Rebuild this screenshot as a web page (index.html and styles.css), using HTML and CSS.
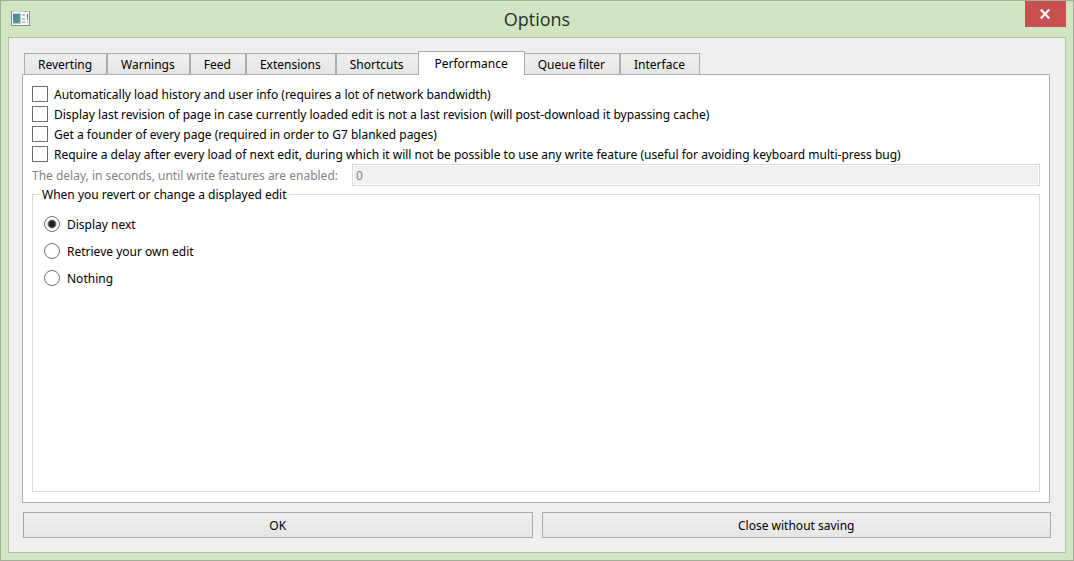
FILE: index.html
```html
<!DOCTYPE html>
<html lang="en">
<head>
<meta charset="utf-8">
<title>Options</title>
<link rel="stylesheet" href="styles.css">
</head>
<body>
<div class="window">
  <header class="titlebar">
    <svg class="app-icon" width="20" height="16" viewBox="0 0 20 16" aria-hidden="true">
      <defs>
        <linearGradient id="screen" x1="0" y1="0" x2="1" y2="1">
          <stop offset="0" stop-color="#4a7fa8"/>
          <stop offset="1" stop-color="#55a878"/>
        </linearGradient>
      </defs>
      <rect x="0" y="0" width="19" height="15" fill="#85898c"/>
      <rect x="1" y="1" width="17" height="13" fill="#fbfbfb"/>
      <rect x="1" y="0" width="17" height="1" fill="#c9ced3"/>
      <rect x="14" y="0" width="1" height="1" fill="#3c5a9a"/>
      <rect x="2" y="2" width="8" height="11" fill="#c3cbd6"/>
      <rect x="2" y="3" width="7" height="9" fill="url(#screen)"/>
      <path d="M11 3h3v2h-3zM11 7h3v2h-3zM11 10h3v2h-3zM16 10h1v2h-1z" fill="#c4c4c4"/>
      <rect x="16" y="3" width="1" height="3" fill="#3f62a0"/>
      <rect x="16" y="6" width="1" height="3" fill="#57a55c"/>
    </svg>
    <h1 class="title">Options</h1>
    <button class="close" type="button" aria-label="Close">
      <svg width="12" height="10" viewBox="0 0 12 10" aria-hidden="true">
        <path d="M1.8 .6L10.2 9.4M10.2 .6L1.8 9.4" fill="none" stroke="#fff" stroke-width="2.2"/>
      </svg>
    </button>
  </header>
  <form class="client">
    <div class="tabs" role="tablist">
      <button class="tab" type="button" role="tab">Reverting</button>
      <button class="tab" type="button" role="tab">Warnings</button>
      <button class="tab" type="button" role="tab">Feed</button>
      <button class="tab" type="button" role="tab">Extensions</button>
      <button class="tab" type="button" role="tab">Shortcuts</button>
      <button class="tab tab-active" type="button" role="tab" aria-selected="true">Performance</button>
      <button class="tab" type="button" role="tab">Queue filter</button>
      <button class="tab" type="button" role="tab">Interface</button>
    </div>
    <section class="pane" role="tabpanel">
      <label class="check"><input type="checkbox">Automatically load history and user info (requires a lot of network bandwidth)</label>
      <label class="check"><input type="checkbox">Display last revision of page in case currently loaded edit is not a last revision (will post-download it bypassing cache)</label>
      <label class="check"><input type="checkbox">Get a founder of every page (required in order to G7 blanked pages)</label>
      <label class="check"><input type="checkbox">Require a delay after every load of next edit, during which it will not be possible to use any write feature (useful for avoiding keyboard multi-press bug)</label>
      <div class="delay">
        <label for="delay">The delay, in seconds, until write features are enabled:</label>
        <input id="delay" class="delay-input" type="text" value="0" disabled>
      </div>
      <fieldset class="group">
        <legend>When you revert or change a displayed edit</legend>
        <label class="radio"><input type="radio" name="after" checked>Display next</label>
        <label class="radio"><input type="radio" name="after">Retrieve your own edit</label>
        <label class="radio"><input type="radio" name="after">Nothing</label>
      </fieldset>
    </section>
    <footer class="actions">
      <button class="button" type="button">OK</button>
      <button class="button" type="button">Close without saving</button>
    </footer>
  </form>
</div>
</body>
</html>
```
FILE: styles.css
```css
* { box-sizing: border-box; }

body {
  margin: 0;
  font: 12px/16px "Noto Sans", "Open Sans", sans-serif;
  color: #000;
}

button, input { font: inherit; color: inherit; }

.window {
  display: flex;
  flex-direction: column;
  min-height: 100vh;
  padding: 0 7px 7px;
  border: 1px solid #a2ae98;
  background: #d2e5c3;
}

.titlebar {
  display: grid;
  grid-template-columns: 1fr auto 1fr;
  height: 36px;
}

.app-icon { margin: 10px 3px; }

.title {
  margin: 0;
  font: 18px/36px "Open Sans", "Noto Sans", sans-serif;
  color: #2b2f28;
}

.close {
  justify-self: end;
  display: flex;
  align-items: center;
  justify-content: center;
  width: 41px;
  height: 26px;
  padding: 0 1px 1px 0;
  border: 0;
  background: #c75050;
}

.client {
  flex: 1;
  display: flex;
  flex-direction: column;
  padding: 13px 14px 14px 13px;
  border: 1px solid #b2c2a5;
  background: #efefef;
}

.tabs {
  display: flex;
  align-items: flex-end;
  padding-left: 2px;
}

.tab {
  height: 21px;
  padding: 1px 14px 0 13px;
  border: 1px solid #acacac;
  border-bottom: 0;
  background: linear-gradient(#f0f0f0, #e5e5e5);
}

.tab-active {
  height: 24px;
  margin: 0 -1px -1px;
  padding: 0 16px;
  background: #fff;
  z-index: 1;
}

.pane {
  flex: 1;
  display: flex;
  flex-direction: column;
  margin-right: 1px;
  padding: 9px 9px 10px;
  border: 1px solid #acacac;
  background: #fff;
}

.check, .radio {
  display: flex;
  align-items: flex-start;
  line-height: 18px;
}

.check {
  height: 20px;
  padding-top: 2px;
  gap: 6px;
}

.radio {
  height: 27px;
  padding-top: 5px;
  gap: 7px;
}

.check input, .radio input {
  appearance: none;
  flex: none;
  width: 16px;
  height: 16px;
  margin: 0;
  border: 1px solid #707070;
  background: #fff;
}

.radio input {
  border-radius: 50%;
}

.radio input:checked {
  background: radial-gradient(circle, #222 3px, #fff 5px);
}

.delay {
  display: flex;
  align-items: center;
  gap: 14px;
  color: #838383;
}

.delay label { padding-top: 2px; }

.delay-input {
  flex: 1;
  min-width: 0;
  height: 22px;
  padding: 0 3px;
  border: 1px solid #d9d9d9;
  background: #f0f0f0;
  box-shadow: inset 0 0 0 1px #fff;
}

.group {
  flex: 1;
  margin: 0;
  padding: 8px 11px;
  border: 1px solid #dcdcdc;
}

.group legend {
  margin-left: -4px;
  padding: 1px 2px 0;
}

.actions {
  display: flex;
  gap: 9px;
  margin: 9px 0 0 1px;
}

.button {
  flex: 1;
  height: 26px;
  padding: 2px 8px 0;
  border: 1px solid #acacac;
  background: linear-gradient(#f0f0f0, #e5e5e5);
}
```
